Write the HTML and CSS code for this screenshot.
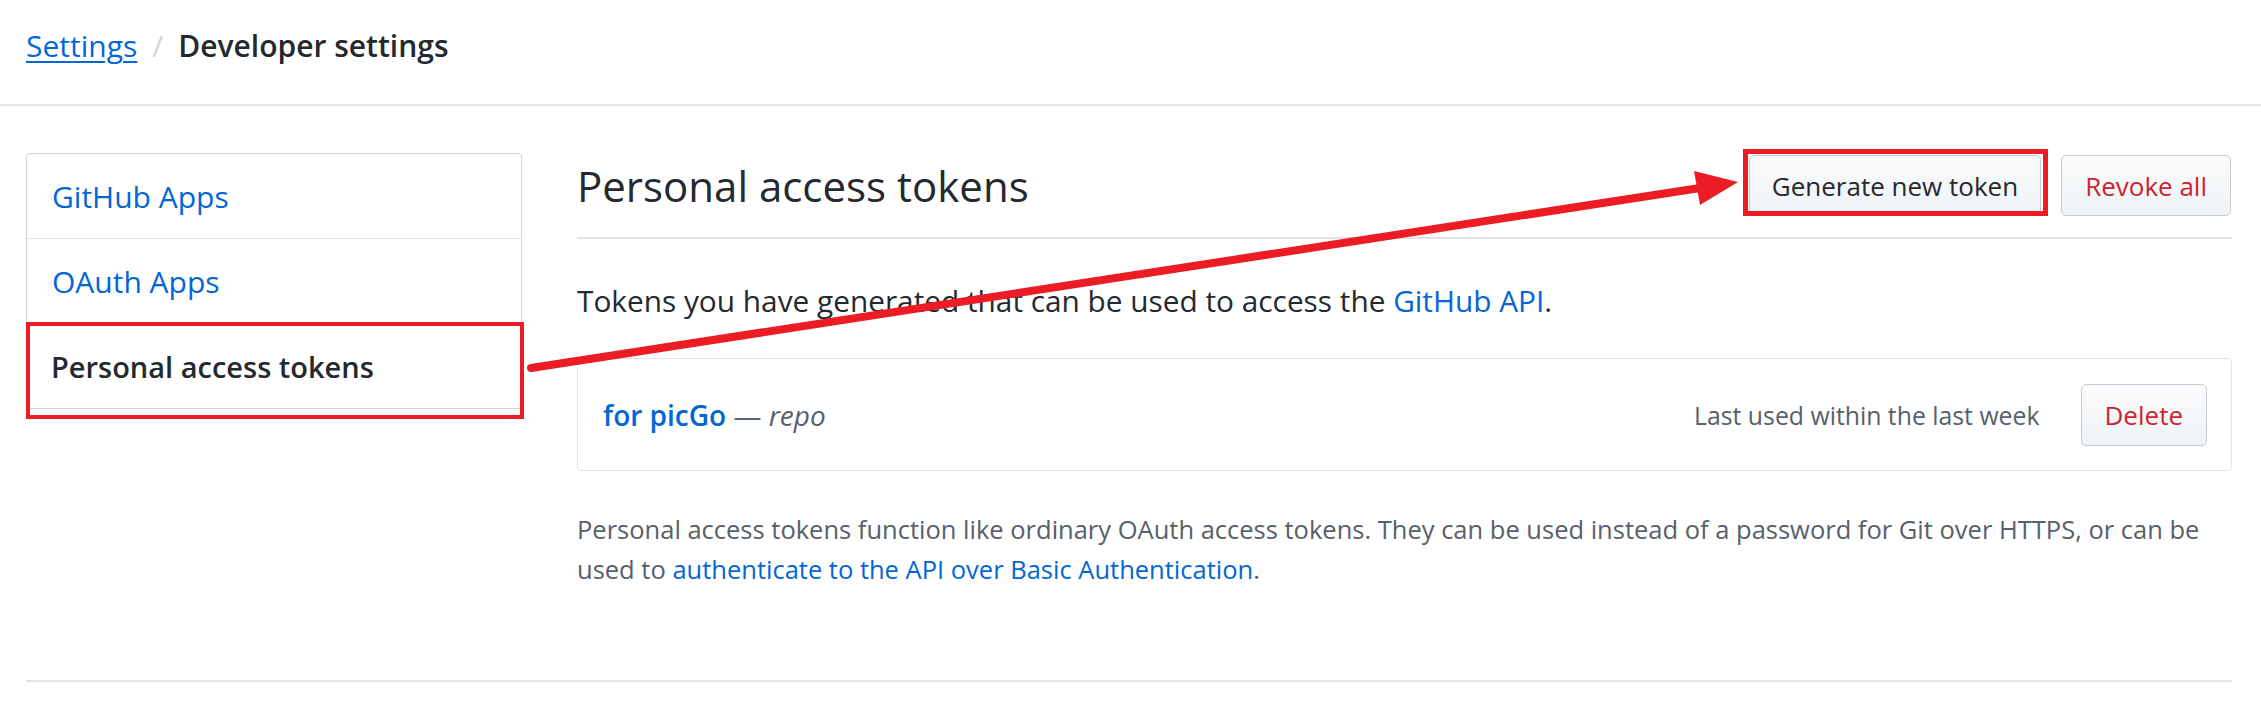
FILE: index.html
```html
<!DOCTYPE html>
<html lang="en">
<head>
<meta charset="utf-8">
<title>Personal access tokens</title>
<link rel="stylesheet" href="styles.css">
</head>
<body>
<header class="pagehead">
  <nav class="breadcrumb">
    <a class="crumb-link" href="#">Settings</a>
    <span class="crumb-sep">/</span>
    <strong class="crumb-current">Developer settings</strong>
  </nav>
</header>

<div class="layout">
  <aside class="sidebar">
    <nav class="menu">
      <a class="menu-item" href="#">GitHub Apps</a>
      <a class="menu-item" href="#">OAuth Apps</a>
      <a class="menu-item selected" href="#">Personal access tokens<span class="annot annot-menu"></span></a>
    </nav>
  </aside>

  <main class="content">
    <div class="subhead">
      <h2 class="subhead-title">Personal access tokens</h2>
      <div class="subhead-actions">
        <a class="btn btn-generate" href="#">Generate new token<span class="annot annot-btn"></span></a>
        <a class="btn btn-danger" href="#">Revoke all</a>
      </div>
    </div>

    <p class="lead">Tokens you have generated that can be used to access the <a class="link" href="#">GitHub API</a>.</p>

    <div class="listing">
      <div class="token-row">
        <div class="token-info">
          <a class="token-name" href="#">for picGo</a>
          <span class="token-dash">—</span>
          <em class="token-scope">repo</em>
        </div>
        <div class="token-meta">
          <span class="last-used">Last used within the last week</span>
          <a class="btn btn-danger btn-delete" href="#">Delete</a>
        </div>
      </div>
    </div>

    <p class="note">Personal access tokens function like ordinary OAuth access tokens. They can be used instead of a password for Git over HTTPS, or can be used to <a class="link" href="#">authenticate to the API over Basic Authentication</a>.</p>
  </main>
</div>

<div class="footer-rule"></div>

<svg class="arrow" width="2261" height="703" viewBox="0 0 2261 703" aria-hidden="true">
  <line x1="531" y1="368" x2="1700" y2="188" stroke="#ec1c24" stroke-width="8" stroke-linecap="round"/>
  <polygon points="1738,182 1694,171 1700,205" fill="#ec1c24"/>
</svg>
</body>
</html>
```

FILE: styles.css
```css
* {
  box-sizing: border-box;
}

html, body {
  margin: 0;
  padding: 0;
  background: #ffffff;
}

body {
  font-family: "Open Sans", "Noto Sans", sans-serif;
  color: #24292e;
  position: relative;
  width: 2261px;
  height: 703px;
  overflow: hidden;
}

a {
  text-decoration: none;
}

/* ---------- header ---------- */
.pagehead {
  height: 106px;
  padding: 26px 0 0 26px;
  border-bottom: 2px solid #e1e4e8;
}

.breadcrumb {
  display: flex;
  align-items: baseline;
  font-size: 30px;
  line-height: 40px;
}

.crumb-link {
  color: #0366d6;
  text-decoration: underline;
  text-decoration-thickness: 2px;
  text-underline-offset: 4px;
}

.crumb-sep {
  color: #d1d5da;
  padding: 0 15px;
}

.crumb-current {
  font-weight: 600;
  color: #24292e;
}

/* ---------- layout ---------- */
.layout {
  display: grid;
  grid-template-columns: 496px 1fr;
  column-gap: 55px;
  padding: 47px 29px 0 26px;
}

/* ---------- sidebar ---------- */
.menu {
  display: flex;
  flex-direction: column;
  border: 1px solid #d1d5da;
  border-radius: 4px;
}

.menu-item {
  position: relative;
  display: block;
  padding: 23px 25px 21px;
  font-size: 30px;
  line-height: 40px;
  color: #0366d6;
  border-bottom: 1px solid #e1e4e8;
}

.menu-item:last-child {
  border-bottom: none;
}

.menu-item.selected {
  color: #24292e;
  font-size: 29px;
  font-weight: 600;
  border-left: 3px solid #e36209;
  padding-left: 22px;
  margin-left: -1px;
}

/* annotation boxes drawn over the screenshot */
.annot {
  position: absolute;
  border: 4px solid #ec1c24;
  pointer-events: none;
}

.annot-menu {
  top: -2px;
  left: -3px;
  right: -3px;
  bottom: -11px;
}

.annot-btn {
  top: -7px;
  left: -7px;
  right: -8px;
  bottom: -1px;
  border-width: 5px;
}

/* ---------- main ---------- */
.subhead {
  display: flex;
  align-items: center;
  justify-content: space-between;
  padding: 2px 0 21px;
  border-bottom: 2px solid #e1e4e8;
}

.subhead-title {
  margin: 0;
  font-size: 42px;
  font-weight: 400;
  line-height: 56px;
  color: #24292e;
}

.subhead-actions {
  display: flex;
  gap: 20px;
  margin-right: 1px;
}

.btn {
  position: relative;
  display: inline-flex;
  align-items: center;
  height: 61px;
  padding: 0 23px;
  font-size: 26px;
  font-weight: 500;
  color: #24292e;
  background: linear-gradient(#fafbfc, #eff3f6);
  border: 1.5px solid #c8cbcf;
  border-radius: 5px;
}

.btn-generate {
  padding: 0 22px;
}

.btn-danger {
  color: #cb2431;
}

.lead {
  margin: 42px 0 37px 0;
  font-size: 29.8px;
  line-height: 40px;
  color: #24292e;
}

.link {
  color: #0366d6;
}

.listing {
  border: 1px solid #e1e4e8;
  border-radius: 5px;
}

.token-row {
  display: flex;
  align-items: center;
  justify-content: space-between;
  padding: 25px 24px 24px 25px;
}

.token-info {
  font-size: 28px;
  line-height: 36px;
}

.token-name {
  color: #0366d6;
  font-weight: 600;
}

.token-dash {
  color: #586069;
}

.token-scope {
  color: #586069;
}

.token-meta {
  display: flex;
  align-items: center;
  gap: 41px;
}

.last-used {
  font-size: 24.8px;
  color: #586069;
}

.btn-delete {
  height: 62px;
  padding: 0 23px;
}

.note {
  margin: 38px 0 0 0;
  padding-right: 12px;
  font-size: 25.5px;
  line-height: 40px;
  color: #586069;
}

.footer-rule {
  position: absolute;
  top: 680px;
  left: 26px;
  right: 29px;
  border-top: 2px solid #e1e4e8;
}

.arrow {
  position: absolute;
  top: 0;
  left: 0;
  pointer-events: none;
}
```
